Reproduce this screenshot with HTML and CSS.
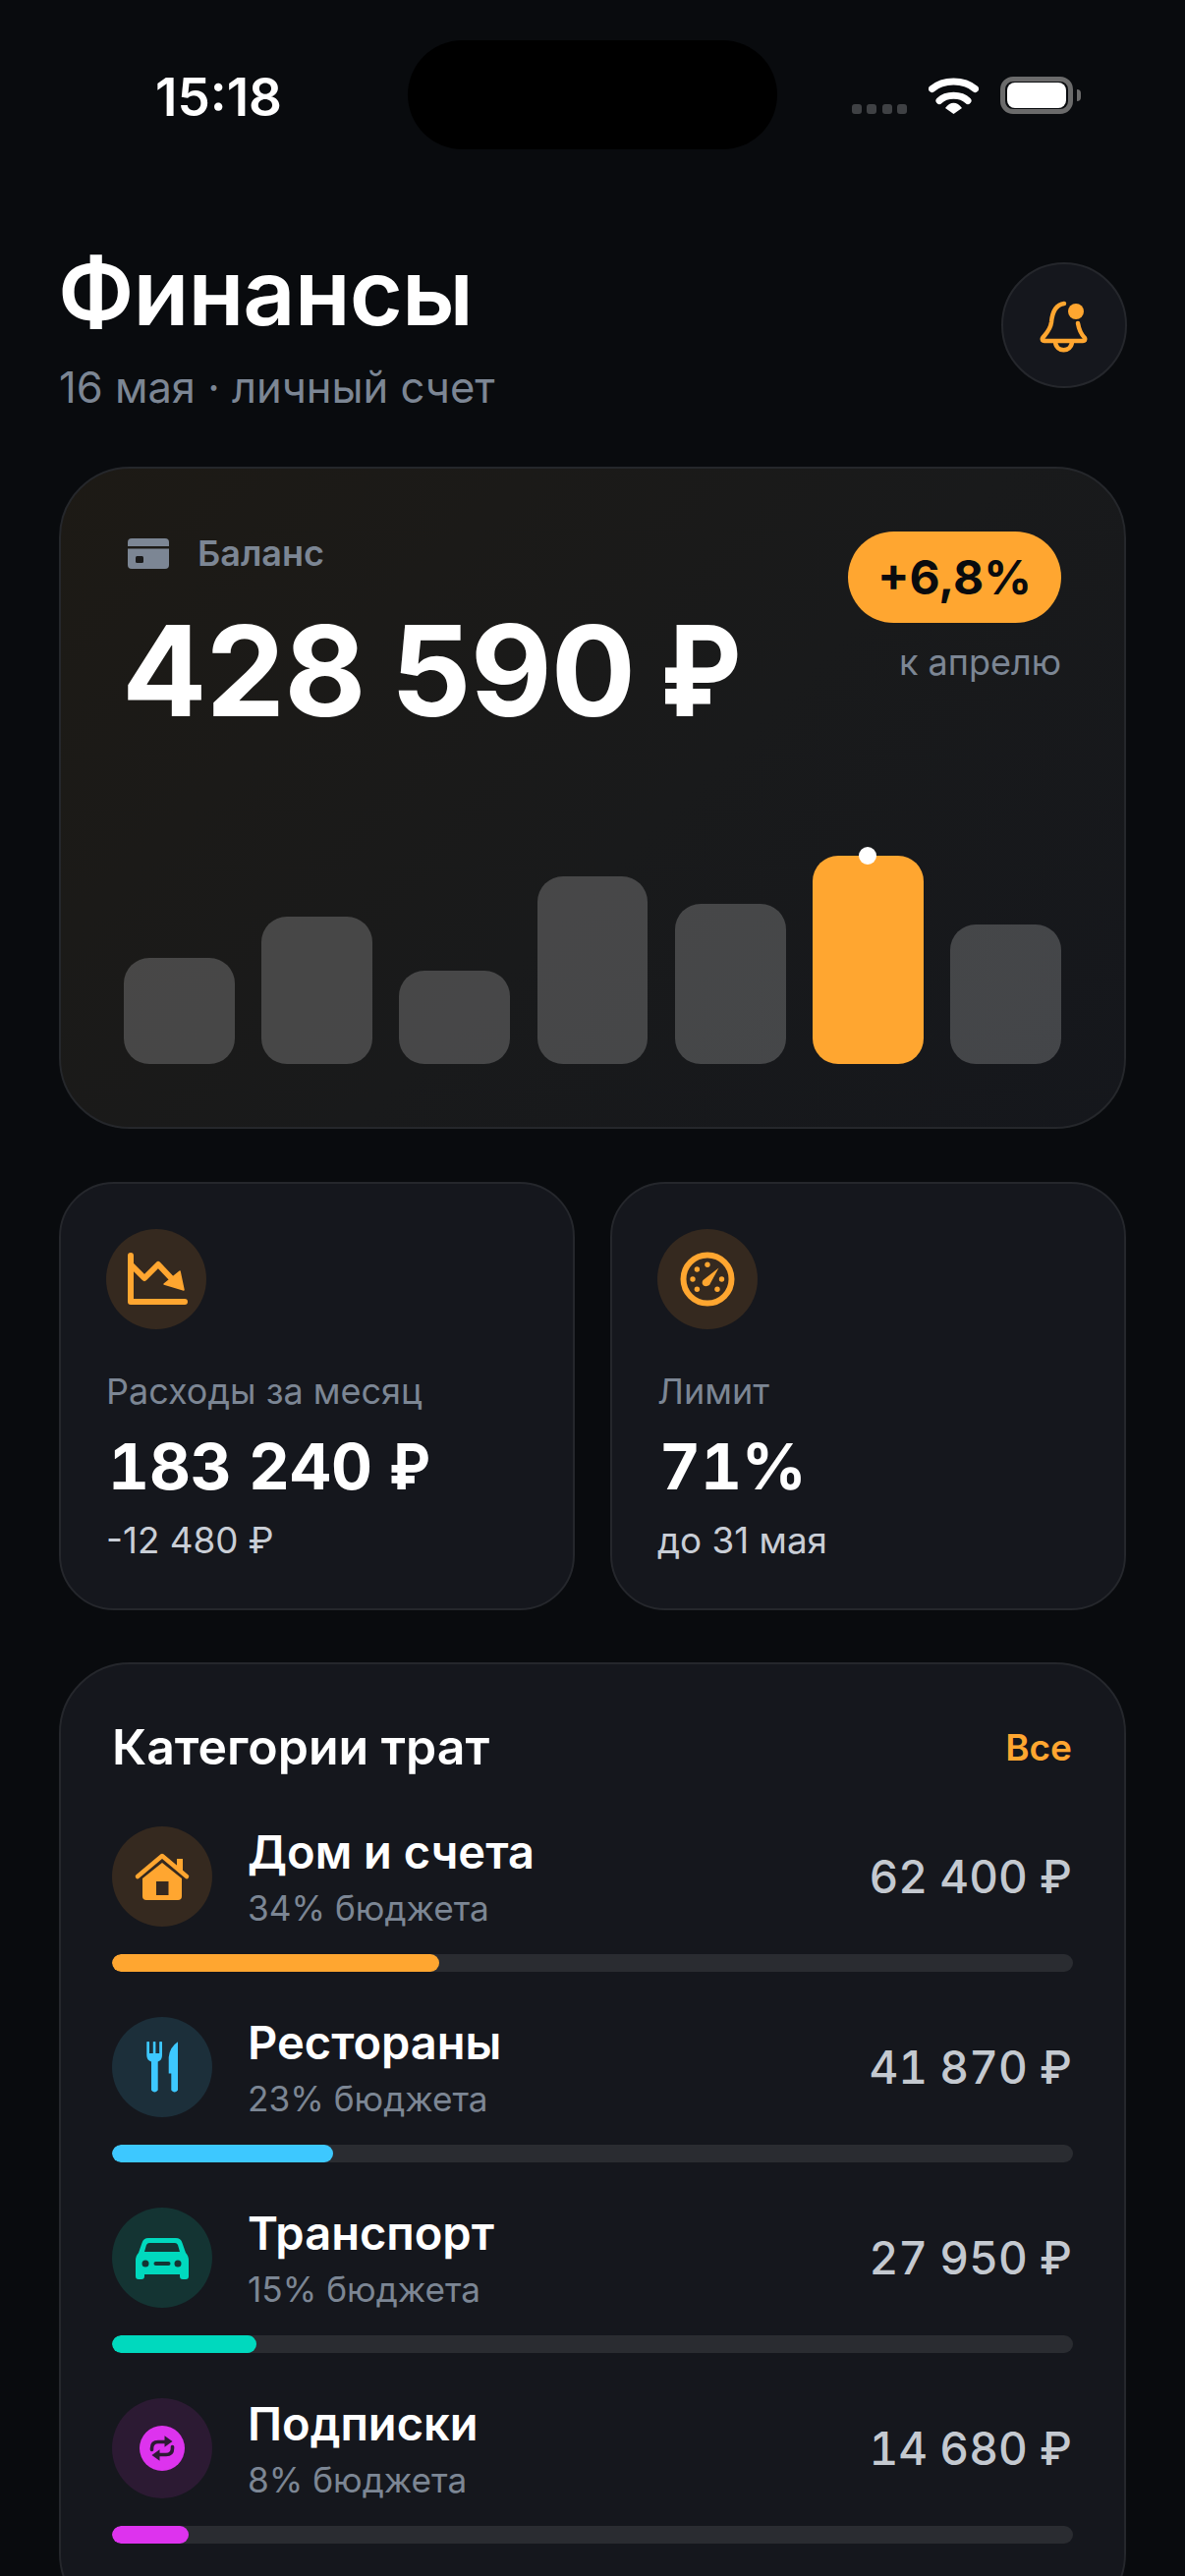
FILE: index.html
```html
<!DOCTYPE html>
<html lang="ru">
<head>
<meta charset="utf-8">
<title>Финансы</title>
<link rel="stylesheet" href="styles.css">
</head>
<body>
<div class="status">
  <div class="time">15:18</div>
  <div class="island"></div>
  <div class="sys">
    <div class="dots"><i></i><i></i><i></i><i></i></div>
    <svg class="wifi" width="51" height="37" viewBox="0 0 51 37"><path d="M3.500 11.500C15 1.500 36 1.500 47.500 11.500" fill="none" stroke="#fff" stroke-width="7" stroke-linecap="round"/><path d="M11 23.500C18 16.500 33 16.500 40 23.500" fill="none" stroke="#fff" stroke-width="7" stroke-linecap="round"/><path d="M17 31C22 24 29 24 34 31L25.500 37Z" fill="#fff"/></svg>
    <div class="batt"><div class="batt-fill"></div></div>
    <div class="batt-cap"></div>
  </div>
</div>

<header class="head">
  <div>
    <h1 class="title">Финансы</h1>
    <div class="date">16 мая · личный счет</div>
  </div>
  <div class="bell">
    <svg width="60" height="60" viewBox="0 0 60 60"><path d="M30 8C22 9 18 16 17 27C16 35 11 39 8 43C7 45 8 46 10 46H49C51 46 52 45 51 43C47 39 45 34 44 28" fill="none" stroke="#ffa630" stroke-width="4.500" stroke-linecap="round" stroke-linejoin="round"/><path d="M21 47C22 58 37 58 38 47" fill="none" stroke="#ffa630" stroke-width="4.500"/><circle cx="42" cy="16" r="8" fill="#ffa630"/></svg>
  </div>
</header>

<section class="balance">
  <div class="bal-top">
    <div>
      <div class="bal-label">
        <svg width="42" height="31" viewBox="0 0 42 31"><path d="M0 8V4Q0 0 4 0H38Q42 0 42 4V8Z" fill="#7c8694"/><path d="M0 10.500H42V27Q42 31 38 31H4Q0 31 0 27Z" fill="#7c8694"/><rect x="8" y="18" width="8" height="7" rx="1.500" fill="#1a1a1a"/></svg>
        <span>Баланс</span>
      </div>
      <div class="bal-amount">428 590 <span class="rub">₽</span></div>
    </div>
    <div class="bal-side">
      <div class="pill">+6,8%</div>
      <div class="bal-note">к апрелю</div>
    </div>
  </div>
  <div class="bars">
    <div class="bar" style="height:108px"></div>
    <div class="bar" style="height:150px"></div>
    <div class="bar" style="height:95px"></div>
    <div class="bar" style="height:191px"></div>
    <div class="bar" style="height:163px"></div>
    <div class="bar bar-on" style="height:212px"><span class="bar-dot"></span></div>
    <div class="bar" style="height:142px"></div>
  </div>
</section>

<section class="stats">
  <div class="stat">
    <div class="ico ico-o">
      <svg width="102" height="102" viewBox="0 0 102 102"><path d="M25 27V74H80" fill="none" stroke="#ffa630" stroke-width="6" stroke-linecap="round" stroke-linejoin="round"/><path d="M25 36L39 50L53 36L70 54" fill="none" stroke="#ffa630" stroke-width="6" stroke-linejoin="round"/><path d="M75 43L79 62L59 56Z" fill="#ffa630" stroke="#ffa630" stroke-width="1.500" stroke-linejoin="round"/></svg>
    </div>
    <div class="stat-label">Расходы за месяц</div>
    <div class="stat-val">183 240 <span class="rub">₽</span></div>
    <div class="stat-sub">-12 480 ₽</div>
  </div>
  <div class="stat">
    <div class="ico ico-o">
      <svg width="102" height="102" viewBox="-51 -51 102 102"><circle r="24.500" fill="none" stroke="#ffa630" stroke-width="6"/><g fill="#ffa630"><circle cx="-10.600" cy="-10" r="2.700"/><circle cy="-14.700" r="2.700"/><circle cx="-15" r="2.700"/><circle cx="14.500" r="2.700"/><circle cx="-10.600" cy="10.300" r="2.700"/><circle cx="10" cy="10.300" r="2.700"/><path d="M11.500 -11.500L2 6Q-1 8 -4 6.500Q-6.500 4 -4.500 1Z"/></g></svg>
    </div>
    <div class="stat-label">Лимит</div>
    <div class="stat-val">71%</div>
    <div class="stat-sub">до 31 мая</div>
  </div>
</section>

<section class="cats">
  <div class="cats-head">
    <h2 class="cats-title">Категории трат</h2>
    <div class="cats-all">Все</div>
  </div>

  <div class="cat">
    <div class="cat-row">
      <div class="ico ico-o">
        <svg width="102" height="102" viewBox="-51 -51 102 102"><path d="M15 -18H21V-4L15 -9Z" fill="#ffa630"/><path d="M0 -14L20 2V20Q20 24 16 24H-16Q-20 24 -20 20V2Z" fill="#ffa630"/><path d="M-25 0L0 -21L25 0" fill="none" stroke="#ffa630" stroke-width="4.500" stroke-linecap="round" stroke-linejoin="round"/><rect x="-6" y="5" width="12.500" height="14" fill="#35291f"/></svg>
      </div>
      <div class="cat-text"><div class="cat-name">Дом и счета</div><div class="cat-pct">34% бюджета</div></div>
      <div class="cat-sum">62 400 ₽</div>
    </div>
    <div class="track"><div class="fill fill-o" style="width:34%"></div></div>
  </div>

  <div class="cat">
    <div class="cat-row">
      <div class="ico ico-b">
        <svg width="102" height="102" viewBox="-51 -51 102 102"><g fill="#3dc8ff"><path d="M-15.700 -25.700Q-14.300 -26.500 -13 -25.700V-14H-9.200V-25.700Q-7.900 -26.500 -6.600 -25.700V-14H-2.800V-25.700Q-1.400 -26.500 0 -25.700V-12Q0 -7 -4.300 -5.500V23.500Q-7.600 27.500 -11 23.500V-5.500Q-15.700 -7 -15.700 -12Z"/><path d="M16 -25.700V23.500Q12.700 27.500 9.300 23.500V6.500H6.700V-10Q7.500 -20 16 -25.700Z"/></g></svg>
      </div>
      <div class="cat-text"><div class="cat-name">Рестораны</div><div class="cat-pct">23% бюджета</div></div>
      <div class="cat-sum">41 870 ₽</div>
    </div>
    <div class="track"><div class="fill fill-b" style="width:23%"></div></div>
  </div>

  <div class="cat">
    <div class="cat-row">
      <div class="ico ico-t">
        <svg width="102" height="102" viewBox="-51 -51 102 102"><path d="M-14 -20H14Q19 -20 20.500 -15L24 -5Q27 -2 27 3V19Q27 22 24 22H21Q18 22 18 19V17H-18V19Q-18 22 -21 22H-24Q-27 22 -27 19V3Q-27 -2 -24 -5L-20.500 -15Q-19 -20 -14 -20Z" fill="#00d9be"/><path d="M-13 -15H13Q15 -15 16 -13L18 -6H-18L-16 -13Q-15 -15 -13 -15Z" fill="#143433"/><circle cx="-17" cy="6" r="3.500" fill="#143433"/><circle cx="16" cy="6" r="3.500" fill="#143433"/><rect x="-8.500" y="4" width="17" height="4" rx="2" fill="#143433"/></svg>
      </div>
      <div class="cat-text"><div class="cat-name">Транспорт</div><div class="cat-pct">15% бюджета</div></div>
      <div class="cat-sum">27 950 ₽</div>
    </div>
    <div class="track"><div class="fill fill-t" style="width:15%"></div></div>
  </div>

  <div class="cat">
    <div class="cat-row">
      <div class="ico ico-p">
        <svg width="102" height="102" viewBox="-51 -51 102 102"><circle r="23" fill="#dd33ee"/><path d="M-10.500 1.500V0Q-10.500 -6.500 -4 -6.500H4" fill="none" stroke="#2c1a33" stroke-width="3.600" stroke-linecap="round"/><path d="M2.500 -12.700L10.500 -7L2.500 -1.300Z" fill="#2c1a33"/><path d="M10.500 -1.500V0Q10.500 6.500 4 6.500H-4" fill="none" stroke="#2c1a33" stroke-width="3.600" stroke-linecap="round"/><path d="M-2.500 12.700L-10.500 7L-2.500 1.300Z" fill="#2c1a33"/></svg>
      </div>
      <div class="cat-text"><div class="cat-name">Подписки</div><div class="cat-pct">8% бюджета</div></div>
      <div class="cat-sum">14 680 ₽</div>
    </div>
    <div class="track"><div class="fill fill-p" style="width:8%"></div></div>
  </div>
</section>
</body>
</html>
```

FILE: styles.css
```css
* { box-sizing: border-box; }
html, body { height: 2622px; overflow: hidden; }
body {
  margin: 0;
  width: 1206px;
  background: #090b0e;
  color: #fff;
  font-family: Inter, "Noto Sans", sans-serif;
}
.status {
  display: grid;
  grid-template-columns: 415px 376px 415px;
  align-items: center;
  padding-top: 41px;
}
.time { padding: 5px 0 0 158px; font-size: 53px; font-weight: 600; line-height: 106px; }
.island { height: 111px; border-radius: 56px; background: #000; }
.sys { display: flex; align-items: flex-end; justify-content: flex-end; padding-right: 106px; height: 38px; }
.dots { display: flex; gap: 5.500px; margin-right: 22px; padding-bottom: 0; }
.dots i { width: 10px; height: 10px; border-radius: 3px; background: #3f4144; }
.wifi { margin-right: 22px; }
.batt { width: 74px; height: 38px; border: 5px solid #6b6b6b; border-radius: 13px; padding: 1px 2px; }
.batt-fill { width: 100%; height: 100%; background: #fff; border-radius: 8px; }
.batt-cap { width: 4px; height: 12px; margin: 0 0 13px 4px; background: #6b6b6b; border-radius: 0 4px 4px 0; }

.head { display: flex; justify-content: space-between; align-items: flex-start; padding: 0 59px 0 60px; margin-top: 97px; }
.title { margin: 0 0 0 -1px; font-size: 93px; font-weight: 600; line-height: 105px; letter-spacing: -1px; transform: translateY(-4px); }
.date { margin-top: 13px; font-size: 43.500px; line-height: 54px; color: #7c8694; }
.bell {
  width: 128px; height: 128px; margin-top: 18px;
  display: flex; align-items: center; justify-content: center;
  border-radius: 50%; background: #15171d; border: 2px solid #25272c;
}

.balance {
  margin: 54px 60px 0;
  height: 674px;
  padding: 64px 64px 64px;
  display: flex; flex-direction: column; justify-content: space-between;
  border-radius: 72px;
  border: 2px solid #25272b;
  background: linear-gradient(135deg, #1d1a15 0%, #191a1b 55%, #15171c 100%);
}
.bal-top { display: flex; justify-content: space-between; align-items: flex-start; }
.bal-label { display: flex; align-items: center; gap: 29px; padding-left: 4px; font-size: 36px; font-weight: 600; line-height: 44px; color: #7c8694; }
.bal-amount { margin: 24px 0 0 -2px; font-size: 128px; font-weight: 700; line-height: 148px; letter-spacing: -1px; word-spacing: -3px; }
.rub { display: inline-block; transform: scaleX(.87); transform-origin: left center; }
.bal-side { display: flex; flex-direction: column; align-items: flex-end; }
.pill { width: 217px; height: 93px; display: flex; align-items: center; justify-content: center; border-radius: 47px; background: #ffa630; color: #090b0e; font-size: 48px; font-weight: 700; }
.bal-note { margin-top: 18px; font-size: 36px; line-height: 44px; color: #7c8694; }
.bars { display: grid; grid-template-columns: repeat(7, 1fr); gap: 27.500px; align-items: end; }
.bar { position: relative; border-radius: 26px; background: rgba(255,255,255,.2); }
.bar-on { background: #ffa630; }
.bar-dot { position: absolute; left: 50%; top: -9px; margin-left: -9px; width: 18px; height: 18px; border-radius: 50%; background: #fff; }

.stats { display: grid; grid-template-columns: 1fr 1fr; gap: 36px; margin: 54px 60px 0; }
.stat { height: 436px; padding: 46px 46px 0; border-radius: 56px; border: 2px solid #25272c; background: #15171d; }
.ico { width: 102px; height: 102px; flex: none; border-radius: 50%; }
.ico svg { display: block; }
.ico-o { background: #35291f; }
.ico-b { background: #1c2f3a; }
.ico-t { background: #143433; }
.ico-p { background: #2c1a33; }
.stat-label { margin-top: 41px; font-size: 36px; line-height: 44px; color: #7c8694; }
.stat-val { margin-top: 15px; padding-left: 2px; font-size: 65px; font-weight: 700; line-height: 80px; letter-spacing: -.1px; font-variant-numeric: tabular-nums; }
.stat-sub { margin-top: 13px; font-size: 36.800px; line-height: 44px; color: #c9ced6; }

.cats { margin: 53px 60px 0; padding: 54px 52px 80px; border-radius: 72px; border: 2px solid #25272c; background: #15171d; }
.cats-head { display: flex; justify-content: space-between; align-items: center; }
.cats-title { margin: 0; font-size: 50px; font-weight: 600; line-height: 60px; }
.cats-all { padding-right: 1px; font-size: 37px; font-weight: 600; color: #ffa630; }
.cat { margin-top: 44px; }
.cats-head + .cat { margin-top: 49px; }
.cat-row { display: flex; align-items: center; }
.cat-text { flex: 1; margin-left: 36px; }
.cat-name { font-size: 47px; font-weight: 600; line-height: 56px; }
.cat-pct { margin-top: 8px; font-size: 35.200px; line-height: 42px; color: #7c8694; }
.cat-sum { padding-right: 1px; font-size: 46px; font-weight: 500; color: #c4c9d0; font-variant-numeric: tabular-nums; }
.track { height: 18px; margin-top: 26px; border-radius: 9px; background: #2a2c31; overflow: hidden; }
.fill { height: 100%; border-radius: 9px; }
.fill-o { background: #ffa630; }
.fill-b { background: #3dc8ff; }
.fill-t { background: #00d9be; }
.fill-p { background: #dd33ee; }
```
